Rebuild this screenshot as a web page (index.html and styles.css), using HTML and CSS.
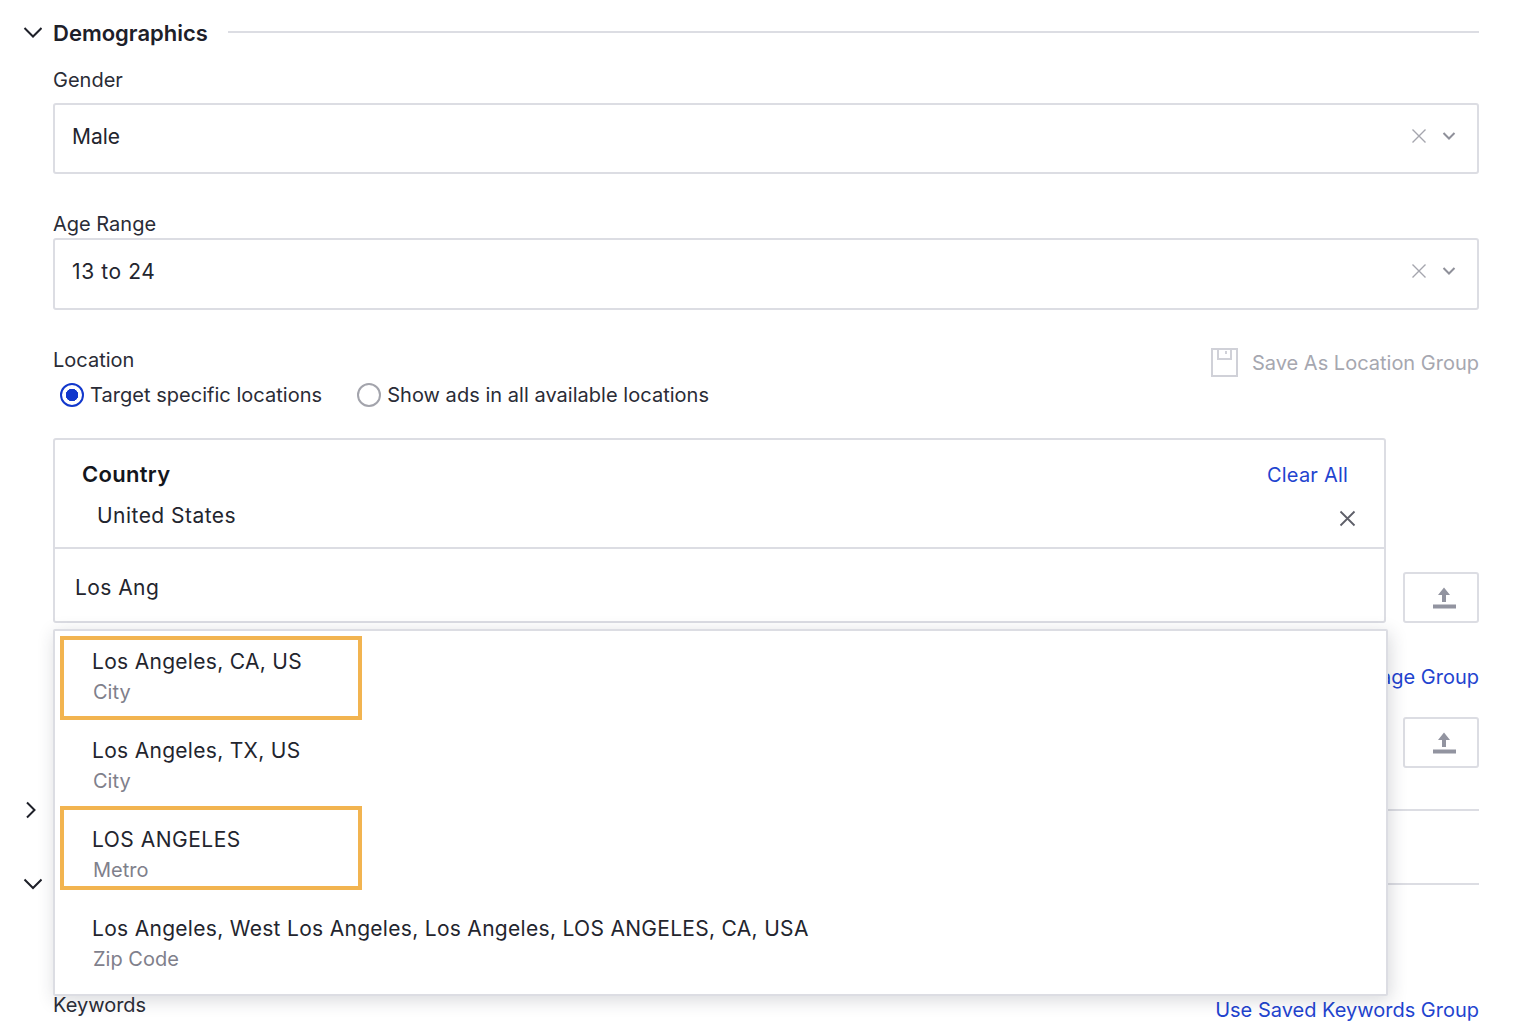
FILE: index.html
```html
<!DOCTYPE html>
<html lang="en">
<head>
<meta charset="utf-8">
<title>Demographics</title>
<link rel="stylesheet" href="styles.css">
</head>
<body>
<main class="page">
  <header class="section-head">
    <svg class="chev" width="20" height="20" viewBox="0 0 20 20"><path d="M2.500 5l8.500 8.500L19.500 5"/></svg>
    <h2 class="section-title">Demographics</h2>
    <span class="section-line"></span>
  </header>

  <div class="body">
    <label class="label label-gender">Gender</label>
    <div class="select select-short">
      <span class="select-value">Male</span>
      <svg class="clear" width="16" height="16" viewBox="0 0 16 16"><path d="M1.500 1.500l13 13M14.500 1.500l-13 13"/></svg>
      <svg class="caret" width="14" height="10" viewBox="0 0 14 10"><path d="M1.500 2l5.500 5.500L12.500 2"/></svg>
    </div>

    <label class="label label-age">Age Range</label>
    <div class="select">
      <span class="select-value select-value-num">13 to 24</span>
      <svg class="clear" width="16" height="16" viewBox="0 0 16 16"><path d="M1.500 1.500l13 13M14.500 1.500l-13 13"/></svg>
      <svg class="caret" width="14" height="10" viewBox="0 0 14 10"><path d="M1.500 2l5.500 5.500L12.500 2"/></svg>
    </div>

    <div class="location-head">
      <div class="location-left">
        <label class="label">Location</label>
        <div class="radios">
          <span class="radio radio-on"></span>
          <span class="radio-text">Target specific locations</span>
          <span class="radio radio-off"></span>
          <span class="radio-text">Show ads in all available locations</span>
        </div>
      </div>
      <div class="save-group">
        <svg class="save-icon" width="27" height="29" viewBox="0 0 27 29"><path d="M1 1h25v27H1zM7 1v10h13V1M15 3v3"/></svg>
        <span>Save As Location Group</span>
      </div>
    </div>

    <div class="location-wrap">
      <div class="location-row">
        <div class="location-fields">
          <div class="country-box">
            <div class="country-top">
              <strong class="country-title">Country</strong>
              <a class="link link-clear">Clear All</a>
            </div>
            <div class="country-item">
              <span>United States</span>
              <svg class="remove" width="17" height="17" viewBox="0 0 17 17"><path d="M1.500 1.500l14 14M15.500 1.500l-14 14"/></svg>
            </div>
          </div>
          <div class="search-box">Los Ang</div>
        </div>
        <button class="upload" type="button">
          <svg width="24" height="24" viewBox="0 0 24 24"><path class="fill" d="M12 1.500l6 7.500h-4v7h-4V9H6zM1 18.500h23v4H1z"/></svg>
        </button>
      </div>

      <div class="popup">
        <div class="option option-marked"><span class="opt-main">Los Angeles, CA, US</span><span class="opt-sub">City</span></div>
        <div class="option"><span class="opt-main">Los Angeles, TX, US</span><span class="opt-sub">City</span></div>
        <div class="option option-marked option-marked-high"><span class="opt-main opt-main-caps">LOS ANGELES</span><span class="opt-sub">Metro</span></div>
        <div class="option"><span class="opt-main">Los Angeles, West Los Angeles, Los Angeles, LOS ANGELES, CA, USA</span><span class="opt-sub">Zip Code</span></div>
      </div>
    </div>

    <div class="link-row link-row-lang"><a class="link">Use Saved Language Group</a></div>
    <div class="upload-row">
      <button class="upload" type="button">
        <svg width="24" height="24" viewBox="0 0 24 24"><path class="fill" d="M12 1.500l6 7.500h-4v7h-4V9H6zM1 18.500h23v4H1z"/></svg>
      </button>
    </div>
  </div>

  <header class="section-head section-closed">
    <svg class="chev" width="20" height="20" viewBox="0 0 20 20"><path d="M5 1.500l7.500 7.500L5 16.500"/></svg>
    <span class="section-line"></span>
  </header>
  <header class="section-head section-open">
    <svg class="chev" width="20" height="20" viewBox="0 0 20 20"><path d="M2.500 4.500l8.500 8.500 8.500-8.500"/></svg>
    <span class="section-line"></span>
  </header>

  <div class="body keywords-row">
    <label class="label">Keywords</label>
    <a class="link link-keywords">Use Saved Keywords Group</a>
  </div>
</main>
</body>
</html>
```
FILE: styles.css
```css
* { box-sizing: border-box; }
html, body { margin: 0; padding: 0; height: 100%; background: #fff; }
body { overflow: hidden; font-family: Inter, "Liberation Sans", sans-serif; color: #1e2029; }

.page { width: 1522px; height: 1030px; padding: 21px 43px 0 22px; overflow: hidden; }

.section-head { display: flex; align-items: center; height: 24px; }
.chev { flex: none; margin-right: 11px; }
.chev path { fill: none; stroke: #1e2029; stroke-width: 2; }
.section-title { margin: 0 20px 0 0; font-size: 22px; line-height: 24px; font-weight: 600; }
.section-line { flex: 1; height: 2px; margin-top: -2px; background: #dcdde3; }

.body { margin-left: 31px; }
.label { display: block; font-size: 20px; line-height: 24px; color: #2a2c36; }
.label-gender { margin-top: 23px; margin-bottom: 11px; }
.label-age { margin-top: 38px; margin-bottom: 2px; }

.select { display: flex; align-items: center; height: 72px; padding: 0 21px 5px 17px; border: 2px solid #dcdde3; border-radius: 3px; }
.select-short { height: 71px; padding-bottom: 4px; }
.select-value { flex: 1; font-size: 21px; color: #23252e; }
.select-value-num { letter-spacing: .6px; }
.clear { margin: -2px 15px 0 0; }
.clear path { fill: none; stroke: #a5a6ae; stroke-width: 1.400; }
.caret { margin-top: -2px; }
.caret path { fill: none; stroke: #8f909a; stroke-width: 2; }

.location-head { display: flex; justify-content: space-between; align-items: flex-start; margin-top: 38px; }
.location-left .label { margin-bottom: 11px; }
.radios { display: flex; align-items: center; margin-left: 7px; font-size: 20px; color: #2a2c36; }
.radio { flex: none; width: 24px; height: 24px; border-radius: 50%; border: 2px solid #a3a4ac; margin-right: 6px; background: #fff; }
.radio-on { border-color: #1238cc; background: radial-gradient(circle, #1238cc 0 6px, #fff 6.500px); }
.radio-off { margin-left: 35px; }
.radio-text { line-height: 24px; letter-spacing: .03px; }
.save-group { display: flex; align-items: center; gap: 14px; font-size: 20px; color: #a6a7b0; }
.save-icon path { fill: none; stroke: #d0d1d8; stroke-width: 2; }

.location-wrap { position: relative; margin-top: 31px; }
.location-row { display: flex; align-items: flex-end; gap: 17px; }
.location-fields { flex: 1; }
.country-box { height: 111px; border: 2px solid #dcdde3; border-radius: 3px 3px 0 0; padding: 20px 28px 0 27px; }
.country-top { display: flex; justify-content: space-between; align-items: center; height: 28px; padding-right: 8px; }
.country-title { font-size: 22px; font-weight: 600; letter-spacing: .3px; color: #14161d; }
.country-item { display: flex; justify-content: space-between; align-items: center; height: 28px; margin-top: 13px; padding-left: 15px; font-size: 21px; letter-spacing: .46px; color: #23252e; }
.remove { margin-top: 6px; }
.remove path { fill: none; stroke: #5e5f69; stroke-width: 1.800; }
.search-box { height: 76px; margin-top: -2px; padding: 4px 20px 0; border: 2px solid #dcdde3; border-radius: 0 0 3px 3px; display: flex; align-items: center; font-size: 21px; letter-spacing: .43px; color: #23252e; }
.link { color: #1f44cf; font-size: 20px; }
.link-clear { letter-spacing: .2px; margin-top: 2px; }

.upload { display: flex; align-items: center; justify-content: center; width: 76px; height: 51px; padding: 0 0 0 6px; background: #fff; border: 2px solid #dcdde3; border-radius: 3px; }
.upload .fill { fill: #9294a0; }

.popup { position: absolute; top: 191px; left: 0; width: 1335px; height: 367px; padding-top: 8.500px; background: #fff; border: 2px solid #dcdde3; border-radius: 2px; box-shadow: 2px 4px 18px rgba(40, 42, 60, .18); z-index: 2; }
.option { position: relative; display: flex; flex-direction: column; height: 89.330px; padding: 6px 0 0 37px; }
.opt-main { font-size: 21px; line-height: 32px; letter-spacing: .3px; color: #23252e; }
.opt-main-caps { letter-spacing: .5px; }
.opt-sub { margin-left: 1px; font-size: 20px; line-height: 28px; color: #7f808b; }
.option-marked::after { content: ""; box-sizing: border-box; position: absolute; left: 5px; top: -3.500px; width: 302px; height: 84px; border: 4px solid #f2b450; }
.option-marked-high::after { top: -12.500px; }

.link-row { display: flex; justify-content: flex-end; }
.link-row-lang { margin-top: 42px; }
.upload-row { display: flex; justify-content: flex-end; margin-top: 28px; }

.section-closed { margin-top: 31px; }
.section-open { margin-top: 50px; }

.keywords-row { display: flex; justify-content: space-between; align-items: flex-start; margin-top: 96px; }
.link-keywords { margin-top: 5px; }
```
